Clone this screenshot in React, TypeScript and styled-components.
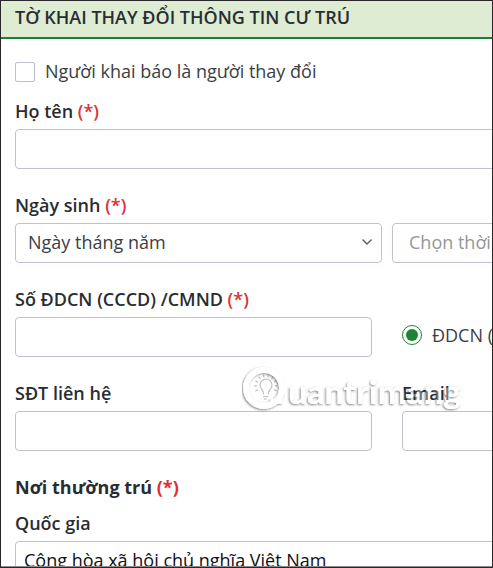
import React from "react";
import styled, { createGlobalStyle } from "styled-components";

const GlobalStyle = createGlobalStyle`
  * { box-sizing: border-box; }
  body { margin: 0; background: #fff; overflow: hidden; }
`;

const Page = styled.main`
  position: relative;
  width: 493px;
  height: 568px;
  overflow: hidden;
  border: 1px solid #29272a;
  background: #fff;
  color: #292d32;
  font: 400 18px/24px "Open Sans", "Noto Sans", sans-serif;
  white-space: nowrap;
`;

const Header = styled.h1`
  height: 38px;
  margin: 0;
  padding: 4px 14px 0;
  border-bottom: 2px solid #1b7f35;
  background: #ddecd2;
  font-size: 18px;
  line-height: 24px;
  font-weight: 600;
`;

const Form = styled.form`
  display: flex;
  flex-direction: column;
  padding-left: 14px;
`;

const CheckRow = styled.label`
  display: flex;
  align-items: center;
  gap: 10px;
  height: 20px;
  margin-top: 23px;
  line-height: 22px;
  color: #3a3e44;
`;

const CheckText = styled.span`
  padding-bottom: 2px;
`;

const Checkbox = styled.span`
  width: 20px;
  height: 20px;
  border: 1px solid #bfc0ce;
  border-radius: 2px;
`;

const Field = styled.div<{ $top?: number }>`
  display: flex;
  flex-direction: column;
  margin-top: ${(p) => p.$top ?? 20}px;
`;

const Label = styled.label<{ $weight?: number; $height?: number }>`
  height: ${(p) => p.$height ?? 34}px;
  padding-top: 4px;
  font-weight: ${(p) => p.$weight ?? 600};
`;

const Required = styled.span<{ $weight?: number }>`
  color: #dc3038;
  font-weight: ${(p) => p.$weight ?? 600};
`;

const Row = styled.div<{ $gap: number }>`
  display: flex;
  gap: ${(p) => p.$gap}px;
`;

const Box = styled.div<{ $width?: number; $inset?: number }>`
  display: flex;
  align-items: center;
  justify-content: space-between;
  flex: none;
  width: ${(p) => p.$width ?? 540}px;
  height: 40px;
  padding: 0 8px 2px ${(p) => p.$inset ?? 12}px;
  border: 1px solid #c0c1cd;
  border-radius: 4px;
`;

const Value = styled.span<{ $color?: string }>`
  color: ${(p) => p.$color ?? "#3a3e44"};
`;

const RadioRow = styled.label`
  display: flex;
  align-items: center;
  gap: 10px;
  height: 36px;
  color: #3a3e44;
`;

const Radio = styled.span`
  display: grid;
  place-items: center;
  width: 20px;
  height: 20px;
  border: 1px solid #1b8535;
  border-radius: 50%;
  &::after {
    content: "";
    width: 12px;
    height: 12px;
    border-radius: 50%;
    background: #1b8535;
  }
`;

const BottomEdge = styled.div`
  position: absolute;
  inset: auto 0 0;
  height: 1px;
  background: #8b898c;
`;

const Watermark = styled.svg`
  position: absolute;
  left: 234px;
  top: 354px;
`;

const Chevron = () => (
  <svg width="12" height="8" viewBox="0 0 12 8" fill="none" stroke="#5c5c5c" strokeWidth="1.4">
    <path d="M1.5 1.5 6 6l4.5-4.5" />
  </svg>
);

const rays = Array.from({ length: 10 }, (_, i) => (-205 + i * 25.5) * (Math.PI / 180));

const Brand = () => (
  <Watermark width="240" height="72" viewBox="235 355 240 72">
    <defs>
      <filter id="emboss" x="-10%" y="-20%" width="120%" height="150%">
        <feGaussianBlur in="SourceAlpha" stdDeviation="0.8" result="soft" />
        <feOffset in="soft" dx="-0.7" dy="0.8" result="shift" />
        <feComposite in="shift" in2="SourceAlpha" operator="out" result="rim" />
        <feFlood floodColor="#222" floodOpacity="0.55" />
        <feComposite in2="rim" operator="in" result="shade" />
        <feComponentTransfer in="SourceGraphic" result="face">
          <feFuncA type="linear" slope="0.35" />
        </feComponentTransfer>
        <feMerge>
          <feMergeNode in="shade" />
          <feMergeNode in="face" />
        </feMerge>
      </filter>
    </defs>
    <g filter="url(#emboss)" fill="none" stroke="#fff" strokeLinecap="round" strokeLinejoin="round">
      <circle cx="264" cy="388" r="18" strokeWidth="6" />
      <path d="M272 400q5 3 9 2 0-2-1-5" strokeWidth="3" />
    </g>
    <g fill="none" stroke="#777" strokeOpacity="0.5" strokeLinecap="round">
      <path d="M263.500 394q0-3-2-5a6 6 0 1 1 9 0q-2 2-2 5m-5 2.500h4.500m-3.500 2.500h2" strokeWidth="1.100" />
      {rays.map((a) => (
        <path
          key={a}
          d={`M${266 + 9.3 * Math.cos(a)} ${386 + 9.3 * Math.sin(a)}L${266 + 11.3 * Math.cos(a)} ${386 + 11.3 * Math.sin(a)}`}
          strokeWidth="1.200"
        />
      ))}
    </g>
    <g filter="url(#emboss)">
      <text
        x="288"
        y="404"
        textLength="173"
        lengthAdjust="spacingAndGlyphs"
        fill="#fff"
        fontFamily="Lato, sans-serif"
        fontSize="33"
        fontWeight="700"
      >
        uantrimang
      </text>
    </g>
  </Watermark>
);

export default function App() {
  return (
    <>
      <GlobalStyle />
      <Page>
        <Header>TỜ KHAI THAY ĐỔI THÔNG TIN CƯ TRÚ</Header>
        <Form>
          <CheckRow>
            <Checkbox />
            <CheckText>Người khai báo là người thay đổi</CheckText>
          </CheckRow>
          <Field $top={13}>
            <Label>Họ tên <Required>(*)</Required></Label>
            <Box />
          </Field>
          <Field>
            <Label>Ngày sinh <Required>(*)</Required></Label>
            <Row $gap={10}>
              <Box $width={367}>
                <Value>Ngày tháng năm</Value>
                <Chevron />
              </Box>
              <Box $width={160} $inset={16}>
                <Value $color="#969696">Chọn thời gian</Value>
              </Box>
            </Row>
          </Field>
          <Field>
            <Label>Số ĐDCN (CCCD) /CMND <Required>(*)</Required></Label>
            <Row $gap={30}>
              <Box $width={357} />
              <RadioRow>
                <Radio />
                ĐDCN (CCCD)
              </RadioRow>
            </Row>
          </Field>
          <Row $gap={30}>
            <Field>
              <Label>SĐT liên hệ</Label>
              <Box $width={357} />
            </Field>
            <Field>
              <Label>Email</Label>
              <Box $width={357} />
            </Field>
          </Row>
          <Field>
            <Label $weight={700} $height={36}>Nơi thường trú <Required $weight={700}>(*)</Required></Label>
            <Label $weight={600}>Quốc gia</Label>
            <Box $inset={8}>
              <Value $color="#101014">Cộng hòa xã hội chủ nghĩa Việt Nam</Value>
            </Box>
          </Field>
        </Form>
        <Brand />
        <BottomEdge />
      </Page>
    </>
  );
}
